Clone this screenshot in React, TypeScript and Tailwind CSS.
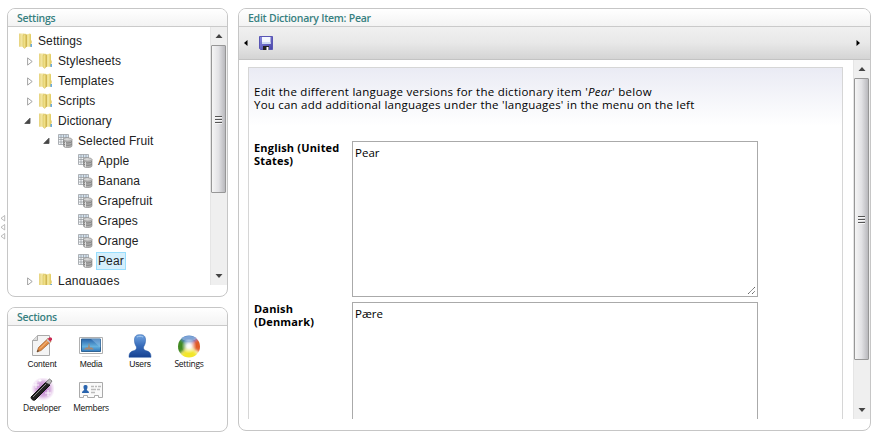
import React from "react";

const SANS = "font-['Open_Sans','Noto_Sans',sans-serif]";

function Folder() {
  return (
    <svg width="14" height="16" viewBox="0 0 14 16" className="shrink-0">
      <defs>
        <linearGradient id="fa" x1="0" x2="1"><stop offset="0" stopColor="#e6d27c" /><stop offset=".6" stopColor="#f5eaa9" /><stop offset="1" stopColor="#e5d06e" /></linearGradient>
        <linearGradient id="fb" x1="0" x2="1"><stop offset="0" stopColor="#d3b94e" /><stop offset=".45" stopColor="#f6eca6" /><stop offset="1" stopColor="#e0c95c" /></linearGradient>
      </defs>
      <path d="M0 .5h5.500v13.300H0z" fill="url(#fa)" />
      <path d="M6.500 1.800 11 .5l1 1v12.300H6.500z" fill="url(#fb)" />
      <path d="M4 2.200 7 1v13.200l-1.300 1.200L4 14z" fill="#f0df86" stroke="#cfb54d" strokeWidth=".5" />
      <path d="M7.200 2v12" stroke="#c4a53c" strokeWidth=".7" fill="none" />
      <path d="M12.300 7.500v3" stroke="#e4d07a" strokeWidth="1" />
      <path d="M12.200 11v3" stroke="#4f9de0" strokeWidth="1.300" />
    </svg>
  );
}

function DataIcon() {
  return (
    <svg width="15" height="14" viewBox="0 0 15 14" className="shrink-0">
      <path d="M.5.5h10v10H.5z" fill="#f6f8fa" />
      <path d="M1 1h9v2H1z" fill="#d3e2ee" />
      <path d="M.5.5h10v10H.5zM.5 3.500h10M.5 5.500h10M.5 8h10M3 .5v10M5.500.5v10M8 .5v10" fill="none" stroke="#9b9fa5" strokeWidth=".8" />
      <path d="M5.500 5.500v6.500c0 2 8.500 2 8.500 0V5.500z" fill="#b4b4b4" stroke="#808080" strokeWidth=".6" />
      <ellipse cx="9.750" cy="5.500" rx="4.250" ry="1.700" fill="#cfcfcf" stroke="#8a8a8a" strokeWidth=".6" />
      <path d="M5.600 7.600c1 1.900 7.300 1.900 8.300 0M5.600 9.900c1 1.900 7.300 1.900 8.300 0" fill="none" stroke="#6e6e6e" strokeWidth=".8" />
      <path d="M7.500 8v5M7.500 4.900h3" stroke="#e4e4e4" strokeWidth=".9" />
    </svg>
  );
}

function Twisty({ open }: { open?: boolean }) {
  return open ? (
    <svg width="8" height="8" viewBox="0 0 8 8" className="shrink-0">
      <path d="M.8 6.500 6 1.200v5.300z" fill="#444" stroke="#555" strokeWidth=".9" strokeLinejoin="round" />
    </svg>
  ) : (
    <svg width="6" height="9" viewBox="0 0 6 9" className="shrink-0">
      <path d="M.6.9v7.200L5.200 4.500z" fill="#fff" stroke="#999" strokeWidth=".9" />
    </svg>
  );
}

function Row({ pad, label, tw, data, selected, spacing }: { pad: string; label: string; tw?: "open" | "closed"; data?: boolean; selected?: boolean; spacing: string }) {
  return (
    <div className={`flex h-5 shrink-0 items-center ${pad}`}>
      {tw && <span className={tw === "open" ? "-ml-[15px] flex w-[15px]" : "-ml-[12px] flex w-[12px]"}><Twisty open={tw === "open"} /></span>}
      <span className="flex w-[17px] shrink-0">{data ? <DataIcon /> : <Folder />}</span>
      <span className={`flex h-[18px] items-center whitespace-nowrap border px-px ${spacing} ${selected ? "border-[#99defd] bg-[#d5effc]" : "border-transparent"}`}>{label}</span>
    </div>
  );
}

function Scrollbar({ thumb }: { thumb: string }) {
  return (
    <div className="flex w-[17px] shrink-0 flex-col items-center border-l border-[#e5e5e5] bg-[#efefef]">
      <div className="flex h-[18px] shrink-0 items-center justify-center">
        <svg width="8" height="4" viewBox="0 0 8 4"><path d="M4 0 7.500 4h-7z" fill="#444" /></svg>
      </div>
      <div className={`-ml-px flex w-[15px] shrink-0 items-center justify-center rounded-[1px] border border-[#979797] bg-linear-to-r from-[#f5f5f5] via-[#e2e2e5] to-[#b9b9bd] ${thumb}`}>
        <svg width="7" height="9" viewBox="0 0 7 9"><path d="M0 1.500h7M0 4.500h7M0 7.500h7" stroke="#555" /><path d="M0 2.500h7M0 5.500h7M0 8.500h7" stroke="#f7f7f7" /></svg>
      </div>
      <div className="flex min-h-0 flex-1 items-end pb-[7px]">
        <svg width="8" height="4" viewBox="0 0 8 4"><path d="M.5 0h7L4 4z" fill="#444" /></svg>
      </div>
    </div>
  );
}

function Panel({ title, size, spacing, children }: { title: string; size: string; spacing: string; children: React.ReactNode }) {
  return (
    <section className={`flex flex-col overflow-hidden rounded-[8px] border border-[#c6c6c6] bg-white ${size}`}>
      <h2 className={`flex h-[18px] shrink-0 items-center whitespace-nowrap border-b border-[#cacaca] bg-linear-to-b from-white to-[#f3f3f3] pl-[9px] pt-[2px] text-[10.5px] font-semibold text-[#378080] ${SANS} ${spacing}`}>{title}</h2>
      {children}
    </section>
  );
}

function ContentIcon() {
  return (
    <svg width="24" height="24" viewBox="0 0 24 24">
      <path d="M7.500 1.500h12v20h-17v-15z" fill="#f4f4f4" stroke="#aaa" />
      <path d="M7.500 1.500v5h-5" fill="#ddd" stroke="#aaa" />
      <path d="m7 18 1.500-4.500L18 4.500l3 3L11 16.500z" fill="#e18a43" stroke="#9b5f2d" strokeWidth=".7" />
      <path d="m10 14.500 9-9" stroke="#fac58c" />
      <path d="m17.800 4.700 2-1.500c2 0 2.500 1 2.200 2.500l-1.500 1.700z" fill="#c92852" />
      <path d="m17 5.500 3 3" stroke="#ccd" strokeWidth="1.200" />
      <path d="m7 18 .8-2 1.200 1z" fill="#333" />
    </svg>
  );
}
function MediaIcon() {
  return (
    <svg width="24" height="24" viewBox="0 0 24 24">
      <defs><linearGradient id="sky" x1="0" y1="0" x2="0" y2="1"><stop stopColor="#2864ac" /><stop offset=".6" stopColor="#65b0dd" /><stop offset="1" stopColor="#2f78bd" /></linearGradient></defs>
      <path d="M.5 3.500h23v16H.5z" fill="#fff" stroke="#b0b0b0" />
      <path d="M2.500 5h19v12.500h-19z" fill="url(#sky)" stroke="#306494" />
      <path d="M12 5h9.500v8.500z" fill="#9cc9ef" opacity=".45" />
      <path d="M5 15.500h10l-2-2h-2l-1-5-1 5H7z" fill="#a88870" />
      <path d="M3 22.500h18" stroke="#ddd" />
    </svg>
  );
}
function UserIcon() {
  return (
    <svg width="24" height="24" viewBox="0 0 24 24">
      <defs><linearGradient id="usr" x1="0" y1="0" x2="0" y2="1"><stop stopColor="#72a5e2" /><stop offset=".5" stopColor="#376bb9" /><stop offset="1" stopColor="#174292" /></linearGradient></defs>
      <path d="M6.500 5C7 1 9.500.7 12 .7S17 1 17.500 5c.3 3.500-.5 5.500-2 8 0 2.500.5 3 3 3.800 3 .9 4.500 2 4.500 6.500H1c0-4.500 1.500-5.600 4.500-6.500 2.500-.8 3-1.300 3-3.800-1.500-2.500-2.300-4.500-2-8z" fill="url(#usr)" stroke="#2459a5" strokeWidth=".5" />
      <path d="M9 3c2-1 4-1 6 0" stroke="#a8caee" fill="none" />
    </svg>
  );
}
function BallIcon() {
  return (
    <svg width="24" height="24" viewBox="0 0 24 24">
      <defs>
        <radialGradient id="core"><stop stopColor="#fff" /><stop offset=".3" stopColor="#fff" stopOpacity=".9" /><stop offset="1" stopColor="#fff" stopOpacity="0" /></radialGradient>
        <clipPath id="ball"><circle cx="12" cy="12.500" r="11" /></clipPath>
        <filter id="mix" x="-20%" y="-20%" width="140%" height="140%"><feGaussianBlur stdDeviation="1.700" /></filter>
      </defs>
      <g clipPath="url(#ball)">
        <g filter="url(#mix)">
          <path d="M12 12-3-1h30z" fill="#477dc4" /><path d="m12 12 15-13v22z" fill="#e05c28" />
          <path d="M12 12-2 27h30z" fill="#f2e62a" /><path d="m12 12-15-13v26z" fill="#428a22" />
        </g>
        <circle cx="12" cy="12" r="7.500" fill="url(#core)" />
        <ellipse cx="12" cy="4.500" rx="7" ry="2.500" fill="#fff" opacity=".3" />
      </g>
    </svg>
  );
}
function WandIcon() {
  return (
    <svg width="24" height="24" viewBox="0 0 24 24">
      <defs><radialGradient id="glow"><stop stopColor="#a955ba" stopOpacity=".9" /><stop offset=".6" stopColor="#bb78c8" stopOpacity=".6" /><stop offset="1" stopColor="#d8a6df" stopOpacity="0" /></radialGradient></defs>
      <circle cx="13" cy="11" r="12" fill="url(#glow)" />
      <path d="M1 19 16 4l4 3L5 22c-2 1-4-1-4-3z" fill="#222" stroke="#111" />
      <path d="M3 19 16 6" stroke="#aaa" strokeWidth=".8" />
      <path d="m15.500 4.500 4-3.500 2.500 2-2.500 3.500z" fill="#bbb" stroke="#444" strokeWidth=".6" />
      <path d="M6 4v6M3 7h6M18 12v6M15 15h6M10 1v3M8.500 2.500h3" stroke="#fff" strokeWidth=".9" />
    </svg>
  );
}
function MemberIcon() {
  return (
    <svg width="24" height="24" viewBox="0 0 24 24">
      <path d="M.5 4.500h23v15h-4v-2h-4v2h-7v-2h-4v2h-4z" fill="#fafafa" stroke="#aaa" />
      <path d="M4.500 8.500c0-2 4-2 4 0 .2 2-.7 2.500-.7 3.500 0 .6 2.200.6 2.200 3H3c0-2.400 2.200-2.400 2.200-3 0-1-.9-1.500-.7-3.500z" fill="#2964ae" />
      <path d="M12 8.500h3m1 0h2m1 0h3M12 11.500h5m1 0h3M12 14.500h4" stroke="#bbb" strokeWidth="1.500" />
    </svg>
  );
}

const ARIAL = "font-['Liberation_Sans',Arial,sans-serif] text-[8.5px] tracking-[-0.1px]";
const HUMAN = "font-['Open_Sans','Noto_Sans',sans-serif] text-[8.5px] tracking-[-0.3px]";

const sections: [string, () => React.ReactElement, string][] = [
  ["Content", ContentIcon, ARIAL],
  ["Media", MediaIcon, ARIAL],
  ["Users", UserIcon, ARIAL],
  ["Settings", BallIcon, HUMAN],
  ["Developer", WandIcon, HUMAN],
  ["Members", MemberIcon, HUMAN],
];

function Field({ label, value, grip }: { label: React.ReactNode; value: string; grip?: boolean }) {
  return (
    <div className="flex shrink-0">
      <div className="w-[98px] shrink-0 whitespace-nowrap text-[11px] font-bold leading-[13px] tracking-[0.18px]">{label}</div>
      <div className="flex h-[156px] w-[406px] justify-between border border-[#aaa] bg-white">
        <span className="pl-[2px] pt-[4px] text-[11.5px] leading-[13px]">{value}</span>
        {grip && <svg width="9" height="9" viewBox="0 0 9 9" className="mb-px mr-px self-end"><path d="m1 8 7-7M5 8l3-3" stroke="#555" strokeWidth=".9" strokeDasharray="1.400 .3" /></svg>}
      </div>
    </div>
  );
}

export default function App() {
  return (
    <main className="flex h-[436px] w-[876px] overflow-hidden bg-white text-black">
      <div className="flex w-[7px] shrink-0 flex-col gap-px pt-[214px]">
        {[0, 1, 2].map((n) => (
          <svg key={n} width="6" height="8" viewBox="0 0 6 8"><path d="M4.700 1.500v5.500L1 4.250z" fill="#fff" stroke="#aaa" strokeWidth=".8" /></svg>
        ))}
      </div>
      <div className="mr-[10px] flex w-[221px] shrink-0 flex-col gap-[10px] pt-2">
        <Panel title="Settings" size="h-[289px]" spacing="tracking-[-0.3px]">
          <div className="flex h-[258px]">
            <nav className="flex min-w-0 flex-1 flex-col overflow-hidden pt-1 font-['Liberation_Sans',Arial,sans-serif] text-[12px] text-[#222]">
              <Row pad="pl-[11px]" label="Settings" spacing="tracking-[0.1px]" />
              <Row pad="pl-[31px]" label="Stylesheets" tw="closed" spacing="tracking-[0.1px]" />
              <Row pad="pl-[31px]" label="Templates" tw="closed" spacing="tracking-[0.15px]" />
              <Row pad="pl-[31px]" label="Scripts" tw="closed" spacing="tracking-[0.1px]" />
              <Row pad="pl-[31px]" label="Dictionary" tw="open" spacing="tracking-[0.05px]" />
              <Row pad="pl-[50px]" label="Selected Fruit" tw="open" data spacing="ml-px tracking-[0.1px]" />
              {["Apple", "Banana", "Grapefruit", "Grapes", "Orange", "Pear"].map((f) => (
                <Row key={f} pad="pl-[70px]" label={f} data selected={f === "Pear"} spacing="ml-px tracking-[0.1px]" />
              ))}
              <Row pad="pl-[31px]" label="Languages" tw="closed" spacing="tracking-[0.25px]" />
            </nav>
            <Scrollbar thumb="h-[148px]" />
          </div>
        </Panel>
        <Panel title="Sections" size="h-[125px]" spacing="tracking-[-0.3px]">
          <div className="grid grid-cols-[repeat(4,49px)] auto-rows-[44px] pl-[9.5px] pt-[8px]">
            {sections.map(([name, Icon, style]) => (
              <div key={name} className="flex flex-col items-center">
                <Icon />
                <span className={`mt-px whitespace-nowrap leading-[10px] text-[#111] ${style}`}>{name}</span>
              </div>
            ))}
          </div>
        </Panel>
      </div>
      <div className="flex pt-2">
        <Panel title="Edit Dictionary Item: Pear" size="h-[423px] w-[633px]" spacing="tracking-[-0.25px]">
          <div className="flex h-[33px] shrink-0 items-center border-b border-[#c3c3c3] bg-linear-to-b from-[#f0f0f0] via-[#e8e8e8] to-[#d4d4d4] px-[5px]">
            <svg width="4" height="6" viewBox="0 0 4 6"><path d="M3.500 0v6L0 3z" /></svg>
            <svg width="14" height="14" viewBox="0 0 14 14" className="ml-[11px]">
              <defs><linearGradient id="disk" x1="0" y1="0" x2="1" y2="1"><stop stopColor="#8a8be0" /><stop offset="1" stopColor="#4643a6" /></linearGradient></defs>
              <path d="M.5.5h13v13h-12l-1-1z" fill="url(#disk)" stroke="#5956b4" />
              <path d="M3 1h8.500v7H3z" fill="#f5f8ff" /><path d="M3 6h8.500v2H3z" fill="#cedbf3" />
              <path d="M4 10h6v4H4z" fill="#222" /><path d="M7.500 11h2v3h-2z" fill="#fff" />
            </svg>
            <svg width="4" height="6" viewBox="0 0 4 6" className="ml-auto mr-[5px]"><path d="M.5 0v6L4 3z" /></svg>
          </div>
          <div className="flex h-[359px]">
            <div className="min-w-0 flex-1 overflow-hidden pl-[9px] pt-[7px]">
              <div className={`flex h-[500px] w-[595px] flex-col gap-[5px] border border-[#d6d6d6] bg-linear-to-b from-[#eaebf4] to-white to-[58px] pl-[5px] pt-[17px] text-[11.5px] leading-[13px] ${SANS}`}>
                <div className="h-[51px] shrink-0 whitespace-nowrap">
                  <p className="tracking-[0.26px]">Edit the different language versions for the dictionary item '<i>Pear</i>' below</p>
                  <p className="tracking-[0.22px]">You can add additional languages under the 'languages' in the menu on the left</p>
                </div>
                <Field label={<>English (United<br />States)</>} value="Pear" grip />
                <Field label={<>Danish<br />(Denmark)</>} value="Pære" />
              </div>
            </div>
            <Scrollbar thumb="h-[282px]" />
          </div>
        </Panel>
      </div>
    </main>
  );
}
